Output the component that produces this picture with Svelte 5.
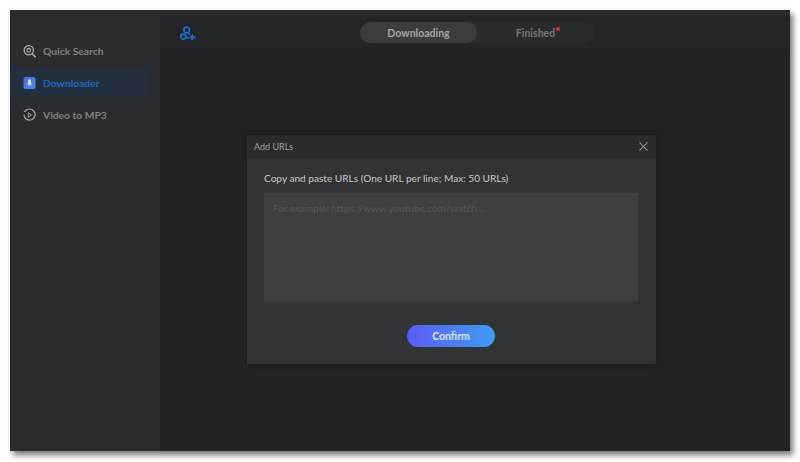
<script>
  let urls = "";
  const items = [
    { id: "search", label: "Quick Search" },
    { id: "down", label: "Downloader", active: true },
    { id: "mp3", label: "Video to MP3" },
  ];
</script>

<div class="page">
  <div class="window">
    <aside class="sidebar">
      {#each items as item}
        <div class="nav-item" class:active={item.active}>
          {#if item.id === "search"}
            <svg width="14" height="14" viewBox="0 0 14 14" fill="none">
              <circle cx="6.2" cy="6.2" r="5" stroke="#a9aaad" stroke-width="1.4" />
              <circle cx="6.2" cy="6.2" r="2" stroke="#a9aaad" stroke-width="1.3" />
              <path d="M10 10l3 3" stroke="#a9aaad" stroke-width="1.8" stroke-linecap="round" />
            </svg>
          {:else if item.id === "down"}
            <svg width="12" height="12" viewBox="0 0 12 12">
              <defs>
                <linearGradient id="dl" x1="0" y1="0" x2="1" y2="1">
                  <stop offset="0" stop-color="#5a63e6" />
                  <stop offset="1" stop-color="#3f97ee" />
                </linearGradient>
              </defs>
              <rect width="12" height="12" rx="2" fill="url(#dl)" />
              <path d="M4.6 3.600a1.400 1.400 0 0 1 2.800 0v2.400h1L6 9 3.600 6h1z" fill="#d9e4fb" />
            </svg>
          {:else}
            <svg width="14" height="14" viewBox="0 0 14 14" fill="none">
              <path d="M2 3.200A6 6 0 1 1 1 7" stroke="#a9aaad" stroke-width="1.300" stroke-linecap="round" />
              <path d="M5.700 4.600l3.400 2.400-3.400 2.400z" stroke="#a9aaad" stroke-width="1" />
              <path d="M0.800 2.600l1.300 0.800 0.600-1.500" stroke="#a9aaad" stroke-width="1" />
            </svg>
          {/if}
          <span>{item.label}</span>
        </div>
      {/each}
    </aside>

    <main class="main">
      <header class="topbar">
        <svg class="add-icon" width="16" height="15" viewBox="0 0 18 17" fill="none">
          <circle cx="7.500" cy="4.500" r="3.200" stroke="#1f6fd0" stroke-width="1.900" />
          <circle cx="3.800" cy="12" r="2.800" stroke="#1f6fd0" stroke-width="1.900" />
          <path d="M5.800 7.500L4.500 9.500M9.500 7.500l1.500 2.500M6.500 13.500h4" stroke="#1f6fd0" stroke-width="1.900" />
          <path d="M13.800 9.500v6.500M10.800 12.700h6.500" stroke="#1f6fd0" stroke-width="2.100" />
        </svg>
        <div class="tabs">
          <div class="tab on">Downloading</div>
          <div class="tab">
            <span class="finished">Finished<i class="dot"></i></span>
          </div>
        </div>
      </header>
    </main>

    <section class="modal">
      <div class="modal-head">
        <span>Add URLs</span>
        <svg width="9" height="9" viewBox="0 0 10 10" fill="none">
          <path d="M0.500 0.500l9 9M9.500 0.500l-9 9" stroke="#8f9093" stroke-width="1.200" />
        </svg>
      </div>
      <div class="modal-body">
        <label for="urls">Copy and paste URLs (One URL per line; Max: 50 URLs)</label>
        <textarea
          id="urls"
          bind:value={urls}
          placeholder="For example: https://www.youtube.com/watch..."
        ></textarea>
        <button>Confirm</button>
      </div>
    </section>
  </div>
</div>

<style>
  :global(body) {
    margin: 0;
    background-color: #fff;
    font-family: "Lato", "Noto Sans", sans-serif;
  }

  .page {
    width: 800px;
    height: 462px;
    padding: 10px 10px 11px;
    box-sizing: border-box;
  }

  .window {
    position: relative;
    display: flex;
    height: 441px;
    background-color: #2b2c30;
    box-shadow: 3px 4px 6px rgba(0, 0, 0, 0.55);
  }

  .sidebar {
    width: 150px;
    flex-shrink: 0;
    padding-top: 26px;
    box-sizing: border-box;
  }

  .nav-item {
    display: flex;
    align-items: center;
    width: 138px;
    height: 29px;
    margin-bottom: 3px;
    padding-left: 13px;
    box-sizing: border-box;
    gap: 7px;
    font-size: 10.300px;
    font-weight: 700;
    color: #808185;
  }

  .nav-item svg {
    width: 13px;
    flex-shrink: 0;
  }

  .nav-item.active {
    background-color: #25303f;
    border-radius: 0 3px 3px 0;
    color: #1c66c4;
  }

  .main {
    flex: 1;
    margin-top: 6px;
    background-color: #222325;
    border-top-left-radius: 5px;
  }

  .topbar {
    position: relative;
    display: flex;
    align-items: center;
    justify-content: center;
    height: 34px;
    padding-left: 4px;
    background-color: #242527;
    border-bottom: 1px solid #1f2021;
    border-top-left-radius: 5px;
    box-sizing: border-box;
  }

  .add-icon {
    position: absolute;
    left: 20px;
    top: 10px;
  }

  .tabs {
    display: flex;
    width: 234px;
    height: 21px;
    border-radius: 11px;
    background-color: #2a2b2e;
    font-size: 10.500px;
    font-weight: 700;
  }

  .tab {
    display: flex;
    align-items: center;
    justify-content: center;
    width: 117px;
    border-radius: 11px;
    color: #77787b;
  }

  .tab.on {
    background-color: #3b3c40;
    color: #a3a4a7;
  }

  .finished {
    position: relative;
  }

  .dot {
    position: absolute;
    top: 0;
    right: -5px;
    width: 4px;
    height: 4px;
    border-radius: 50%;
    background-color: #e0302f;
  }

  .modal {
    position: absolute;
    left: 237px;
    top: 125px;
    width: 409px;
    height: 229px;
    background-color: #323336;
    box-shadow: 0 0 8px rgba(0, 0, 0, 0.25);
  }

  .modal-head {
    display: flex;
    align-items: center;
    justify-content: space-between;
    height: 23px;
    padding: 0 8px 0 7px;
    background-color: #2a2b2f;
    font-size: 9px;
    color: #9d9ea1;
  }

  .modal-body {
    display: flex;
    flex-direction: column;
    padding: 0 18px 0 17px;
  }

  label {
    margin-top: 13px;
    height: 14px;
    line-height: 14px;
    font-size: 10.100px;
    color: #c6c7c9;
  }

  textarea {
    margin-top: 8px;
    height: 108px;
    padding: 9px 9px;
    border: none;
    outline: none;
    resize: none;
    box-sizing: border-box;
    background-color: #3e3f42;
    font-family: inherit;
    font-size: 10px;
    color: #c6c7c9;
  }

  textarea::placeholder {
    color: #56575a;
    opacity: 1;
  }

  button {
    align-self: center;
    width: 88px;
    height: 22px;
    margin-top: 24px;
    padding: 0;
    border: none;
    border-radius: 11px;
    background: linear-gradient(90deg, #5b5cf0, #3e9df4);
    font-family: inherit;
    font-size: 10.500px;
    font-weight: 700;
    color: #dfe6fb;
  }
</style>
